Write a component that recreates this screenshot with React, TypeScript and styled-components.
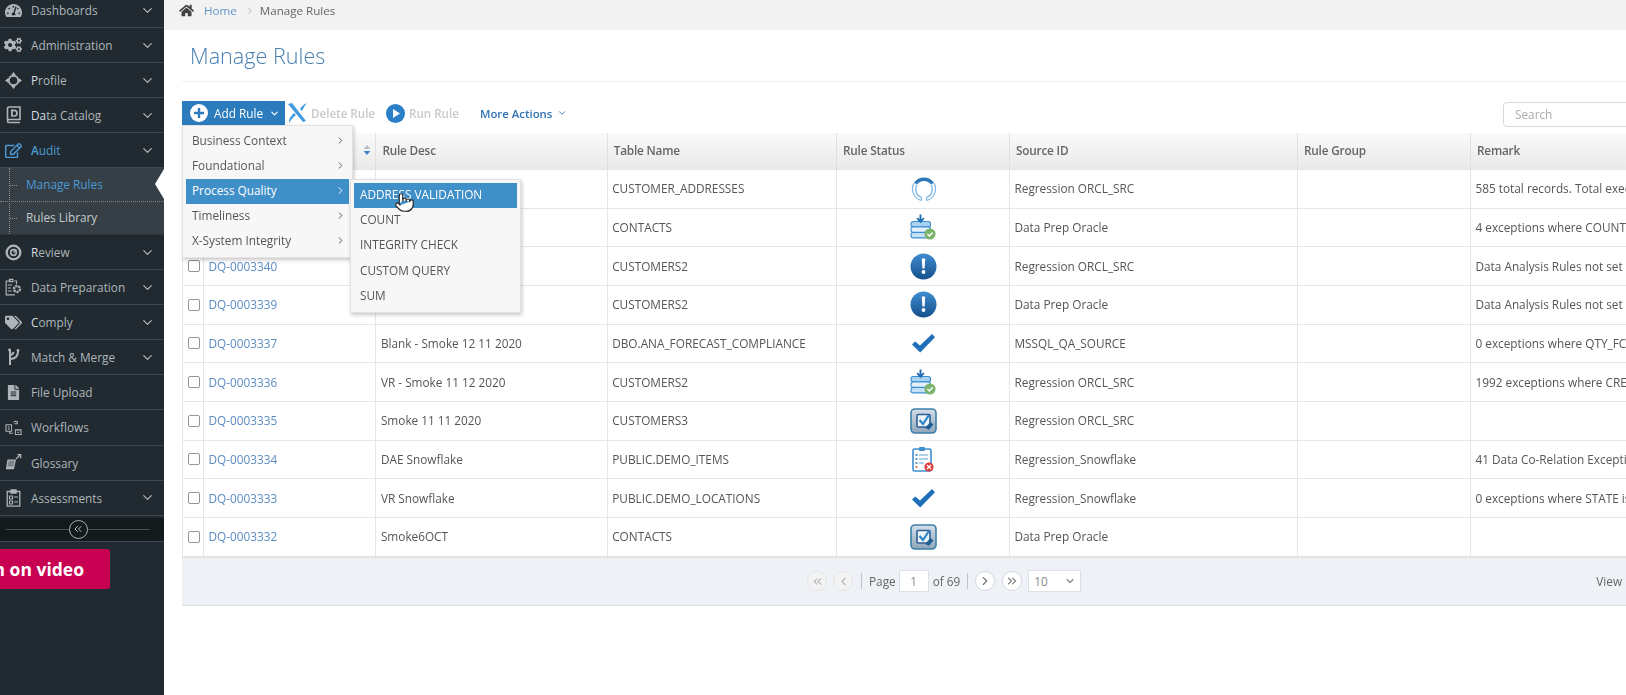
import React from "react";
import styled, { createGlobalStyle } from "styled-components";
import { ChevronDown, ChevronLeft, ChevronRight, ChevronsLeft, ChevronsRight, Pointer } from "lucide-react";
import { FaCogs, FaFileAlt, FaHome, FaRegEdit, FaTachometerAlt, FaTags } from "react-icons/fa";

const GlobalStyle = createGlobalStyle`
    html, body {
        margin: 0;
        padding: 0;
        height: 100%;
        background: #ffffff;
        overflow: hidden;
        font-family: "Open Sans", "Liberation Sans", sans-serif;
    }
`;

const Page = styled.div`
    display: flex;
    width: 1626px;
    height: 695px;
    overflow: hidden;
    font-size: 11.8px;
    color: #555;
    filter: blur(0.4px);
`;

const Sidebar = styled.aside`
    width: 164px;
    flex: none;
    background: #212a30;
    overflow: hidden;
    display: flex;
    flex-direction: column;
`;

const NavList = styled.nav`
    margin-top: -7px;
    display: flex;
    flex-direction: column;
`;

const NavItem = styled.div<{ $active?: boolean }>`
    height: 35.1px;
    box-sizing: border-box;
    flex: none;
    display: flex;
    align-items: center;
    padding: 0 9px 0 4px;
    border-bottom: 1px solid #3c464d;
    color: ${(p) => (p.$active ? "#4c9ad6" : "#aeb6bb")};
`;

const NavIcon = styled.span`
    width: 18px;
    height: 18px;
    flex: none;
    display: flex;
    align-items: center;
    justify-content: center;
    margin-right: 9px;
    color: inherit;
`;

const NavLabel = styled.span`
    flex: 1;
    white-space: nowrap;
`;

const NavKey = styled.b`
    font-weight: 500;
    color: #d8dde0;
`;

const ActiveKey = styled.b`
    font-weight: 600;
    color: #4c9ad6;
`;

const SubNav = styled.div`
    height: 66.5px;
    flex: none;
    background: #363f45;
    display: flex;
    flex-direction: column;
    position: relative;
    border-bottom: 1px solid #2b3338;
    box-sizing: border-box;

    &::before {
        content: "";
        position: absolute;
        left: 9px;
        top: 0;
        bottom: 0;
        border-left: 1px dotted #8a9297;
    }
`;

const SubItem = styled.div<{ $active?: boolean }>`
    flex: 1;
    display: flex;
    align-items: center;
    padding: 0 0 2px 26px;
    position: relative;
    color: ${(p) => (p.$active ? "#4c9ad6" : "#c4cace")};
    border-bottom: ${(p) => (p.$active ? "1px dotted #7b8388" : "none")};

    &::before {
        content: "";
        position: absolute;
        left: 10px;
        top: 50%;
        width: 7px;
        border-top: 1px dotted #8a9297;
    }
`;

const Notch = styled.span`
    position: absolute;
    right: 0;
    top: 1px;
    width: 0;
    height: 0;
    border-top: 15px solid transparent;
    border-bottom: 15px solid transparent;
    border-right: 9px solid #ffffff;
`;

const CollapseBar = styled.div`
    height: 23px;
    margin-top: 2px;
    flex: none;
    background: #14191c;
    display: flex;
    align-items: center;
    justify-content: center;
    position: relative;
    border-bottom: 1px solid #3c464d;

    &::before {
        content: "";
        position: absolute;
        left: 6px;
        right: 14px;
        top: 50%;
        border-top: 1px solid #4a5258;
    }
`;

const CollapseButton = styled.span`
    width: 17px;
    height: 17px;
    border-radius: 50%;
    border: 1px solid #a9afb3;
    background: #14191c;
    color: #b9bfc3;
    display: flex;
    align-items: center;
    justify-content: center;
    margin-left: -8px;
    position: relative;
`;

const VideoButton = styled.div`
    margin-top: 7.5px;
    width: 110px;
    height: 40px;
    flex: none;
    background: #c80052;
    border-radius: 0 3px 3px 0;
    color: #fff;
    font-family: "Open Sans", sans-serif;
    font-weight: 700;
    font-size: 17.5px;
    display: flex;
    align-items: center;
    justify-content: flex-end;
    padding-right: 26px;
    box-sizing: border-box;
    white-space: nowrap;
    overflow: hidden;
`;

const Main = styled.main`
    flex: 1;
    min-width: 0;
    display: flex;
    flex-direction: column;
    overflow: hidden;
`;

const Breadcrumb = styled.div`
    height: 30px;
    flex: none;
    background: #f2f2f2;
    display: flex;
    align-items: center;
    padding: 0 0 9px 15px;
    box-sizing: border-box;
    color: #666;
    font-size: 11.6px;
    gap: 8px;
`;

const HomeIcon = styled(FaHome)`
    color: #444;
    font-size: 15px;
    margin-right: 2px;
`;

const CrumbLink = styled.a`
    color: #5f97c8;
`;

const CrumbCurrent = styled.span`
    margin-left: -3px;
`;

const TitleBlock = styled.div`
    margin-left: 18px;
    height: 52px;
    box-sizing: border-box;
    flex: none;
    padding: 11px 0 0 8px;
    border-bottom: 1px solid #f0f0f0;
`;

const Title = styled.h1`
    margin: 0;
    font-size: 21.6px;
    line-height: 30px;
    font-weight: 300;
    color: #467fb1;
`;

const Content = styled.div`
    margin-left: 18px;
    display: flex;
    flex-direction: column;
`;

const Toolbar = styled.div`
    margin-top: 19px;
    height: 24px;
    display: flex;
    align-items: center;
    position: relative;
    z-index: 2;
`;

const AddRuleWrap = styled.div`
    position: relative;
    flex: none;
`;

const AddRuleButton = styled.div`
    width: 103px;
    height: 24px;
    background: #2b7bbd;
    color: #fff;
    display: flex;
    align-items: center;
    padding-left: 8px;
    box-sizing: border-box;
    gap: 6px;
`;

const ToolAction = styled.span<{ $gap: number }>`
    display: flex;
    align-items: center;
    gap: 4px;
    margin-left: ${(p) => p.$gap}px;
    color: #c9c9c9;
    font-weight: 600;
    font-size: 11.6px;
    white-space: nowrap;
`;

const MoreActions = styled.span`
    margin-left: 21px;
    display: flex;
    align-items: center;
    gap: 5px;
    color: #2f73b3;
    font-weight: 600;
    font-size: 11.4px;
    white-space: nowrap;
`;

const SearchBox = styled.div`
    margin-left: auto;
    margin-top: 2px;
    width: 160px;
    height: 25px;
    flex: none;
    margin-right: -37px;
    border: 1px solid #d8d8d8;
    border-radius: 4px;
    box-sizing: border-box;
    color: #aaa;
    padding-left: 11px;
    display: flex;
    align-items: center;
`;

const Menu = styled.div<{ $sub?: boolean }>`
    position: absolute;
    width: 170.5px;
    box-sizing: border-box;
    background: #f7f7f7;
    border: 1px solid #e2e2e2;
    box-shadow: 1px 2px 4px rgba(0, 0, 0, 0.22);
    padding: 3px;
    left: ${(p) => (p.$sub ? "164px" : "0")};
    top: ${(p) => (p.$sub ? "0" : "24px")};
    color: #555;
`;

const MenuRow = styled.div<{ $active?: boolean }>`
    height: 25.1px;
    box-sizing: border-box;
    position: relative;
    display: flex;
    align-items: center;
    justify-content: space-between;
    padding: 0 3px 3px 6px;
    background: ${(p) => (p.$active ? "#3f8fc9" : "transparent")};
    color: ${(p) => (p.$active ? "#fff" : "#555")};
    white-space: nowrap;
`;

const HandCursor = styled(Pointer)`
    position: absolute;
    left: 40px;
    top: 9px;
    z-index: 3;
`;

const Grid = styled.div`
    display: grid;
    grid-template-columns: 22px 172.4px 231.3px 229.3px 173px 288px 173px 400px;
`;

const HeaderRow = styled(Grid)`
    margin-top: 8px;
    height: 37px;
    background: linear-gradient(#fafafa, #e9e9e9);
`;

const HeaderCell = styled.div`
    display: flex;
    align-items: center;
    justify-content: space-between;
    padding: 0 6px 3px;
    font-weight: 600;
    letter-spacing: -0.2px;
    color: #666;
    border-right: 1px solid #e0e0e0;
    box-sizing: border-box;
`;

const SortArrows = styled.svg`
    flex: none;
    margin-right: -2px;
`;

const BodyRow = styled(Grid)`
    height: 38.67px;
    box-sizing: border-box;
    border-bottom: 1px solid #e6e6e6;
`;

const Cell = styled.div`
    display: flex;
    align-items: center;
    padding: 0 5px 1px 4.5px;
    box-sizing: border-box;
    border-right: 1px solid #e6e6e6;
    white-space: nowrap;
    overflow: hidden;
    color: #555;
`;

const CheckCell = styled(Cell)`
    border-left: 1px solid #e6e6e6;
    padding: 0 0 0 4.5px;
`;

const CheckBox = styled.span`
    width: 12px;
    height: 12px;
    box-sizing: border-box;
    flex: none;
    border: 1px solid #949494;
    border-radius: 2px;
    background: #fff;
`;

const IdLink = styled.a`
    color: #5b8cc2;
`;

const StatusCell = styled(Cell)`
    justify-content: center;
    padding: 0 0 0 1.5px;
`;

const Footer = styled.div`
    height: 49px;
    background: #eef1f6;
    border-top: 1px solid #e2e2e2;
    border-bottom: 1px solid #e2e2e2;
    box-sizing: border-box;
    display: flex;
    align-items: center;
    padding-left: 625px;
    color: #666;
    white-space: nowrap;
`;

const PagerButton = styled.span<{ $off?: boolean; $gap: number }>`
    width: 20px;
    height: 20px;
    box-sizing: border-box;
    flex: none;
    border-radius: 50%;
    background: ${(p) => (p.$off ? "#f3f3f3" : "#fff")};
    border: 1px solid ${(p) => (p.$off ? "#e6e6e6" : "#d5d9de")};
    color: ${(p) => (p.$off ? "#b5b5b5" : "#777")};
    display: flex;
    align-items: center;
    justify-content: center;
    margin-left: ${(p) => p.$gap}px;
`;

const PagerSep = styled.span<{ $gap: number }>`
    width: 1px;
    height: 16px;
    flex: none;
    background: #bfc4ca;
    margin: 0 7px 0 ${(p) => p.$gap}px;
`;

const PageInput = styled.span`
    width: 30px;
    height: 22px;
    flex: none;
    margin: 0 4px 0 3px;
    box-sizing: border-box;
    background: #fff;
    border: 1px solid #dcdfe3;
    display: flex;
    align-items: center;
    justify-content: center;
    color: #888;
`;

const PageSize = styled.span`
    width: 53px;
    height: 22px;
    flex: none;
    margin-left: 6px;
    box-sizing: border-box;
    background: #fff;
    border: 1px solid #dcdfe3;
    display: flex;
    align-items: center;
    justify-content: space-between;
    padding: 0 4px 0 5px;
    color: #888;
`;

const ViewText = styled.span`
    margin-left: 515px;
`;

type NavEntry = {
    key?: string;
    label: string;
    icon: React.ReactNode;
    arrow?: boolean;
};

const strokeIcon = { fill: "none", stroke: "currentColor", strokeWidth: 1.6 };

const ProfileIcon = () => (
    <svg width="17" height="17" viewBox="0 0 18 18">
        <circle cx="9" cy="9" r="5" {...strokeIcon} strokeWidth={2} />
        <path d="M9 0l2.4 3.2H6.6zM9 18l-2.4-3.2h4.8zM0 9l3.2-2.4v4.8zM18 9l-3.2 2.4V6.6z" fill="currentColor" />
    </svg>
);

const CatalogIcon = () => (
    <svg width="15" height="18" viewBox="0 0 15 18">
        <path d="M1.5 14V2.5A1.5 1.5 0 0 1 3 1h11v12.5H3A1.5 1.5 0 0 0 1.5 15 1.5 1.5 0 0 0 3 16.5h11" {...strokeIcon} />
        <path d="M5 3.6h3.2a3.2 3.2 0 0 1 0 7.2H5zM6.8 5.2v4h1.3a1.9 1.9 0 0 0 0-4z" fill="currentColor" fillRule="evenodd" />
    </svg>
);

const ReviewIcon = () => (
    <svg width="17" height="17" viewBox="0 0 18 18">
        <circle cx="9" cy="9" r="7.2" {...strokeIcon} strokeWidth={2.4} />
        <circle cx="9" cy="9" r="3" {...strokeIcon} strokeWidth={1.8} />
        <path d="M9 9l3-3" stroke="currentColor" strokeWidth={1.4} />
    </svg>
);

const PrepIcon = () => (
    <svg width="17" height="18" viewBox="0 0 17 18">
        <path d="M6 3H1.2v13.8h8.6" {...strokeIcon} strokeWidth={1.2} />
        <path d="M4.5 3.6V1.4h3.4v2.2zM3 7h4M3 10h3M3 13h3.6M9.5 3h2v3" {...strokeIcon} strokeWidth={1.2} />
        <circle cx="12" cy="11" r="3" {...strokeIcon} strokeWidth={2.4} strokeDasharray="2.2 0.8" />
    </svg>
);

const MergeIcon = () => (
    <svg width="15" height="18" viewBox="0 0 15 18">
        <path d="M4 17V1.5M4 11c5 0 8-2 8-8M4 7c2 0 3-1 3.5-3" fill="none" stroke="currentColor" strokeWidth={2} />
        <circle cx="12" cy="2.5" r="1.4" fill="currentColor" />
        <circle cx="3.5" cy="2" r="1.4" fill="currentColor" />
    </svg>
);

const WorkflowIcon = () => (
    <svg width="17" height="17" viewBox="0 0 18 18">
        <path d="M1 6h6v7H1zM3 8.5h2M3 10.5h2M11 11.5h6v5h-6zM13 14h2M9 3.5a3 3 0 0 1 4.5 0M13 2v3h-3M8.5 15H5v-2" {...strokeIcon} strokeWidth={1.1} />
    </svg>
);

const GlossaryIcon = () => (
    <svg width="21" height="21" viewBox="0 0 21 21">
        <path d="M4 7h10l-2.4 11.5H2.2z" fill="currentColor" />
        <path d="M5.6 8.6h6.6l-1.4 6.6H4.2z" fill="#7c8489" />
        <path d="M14 6.4L19 1.6M15.5 1.4h4v4" {...strokeIcon} strokeWidth={1.5} />
    </svg>
);

const AssessIcon = () => (
    <svg width="15" height="18" viewBox="0 0 15 18">
        <path d="M1.2 2.5h12.6v14.6H1.2zM5 1h5v3H5z" {...strokeIcon} strokeWidth={1.3} />
        <path d="M3.5 7h3v3h-3zM3.5 12h3v3h-3zM8 8h4M8 13h4" {...strokeIcon} strokeWidth={1.1} />
    </svg>
);

const navTop: NavEntry[] = [
    { label: "Dashboards", icon: <FaTachometerAlt size={17} />, arrow: true },
    { label: "Administration", icon: <FaCogs size={18} />, arrow: true },
    { key: "P", label: "rofile", icon: <ProfileIcon />, arrow: true },
    { key: "Da", label: "ta Catalog", icon: <CatalogIcon />, arrow: true },
];

const navBottom: NavEntry[] = [
    { key: "R", label: "eview", icon: <ReviewIcon />, arrow: true },
    { label: "Data Preparation", icon: <PrepIcon />, arrow: true },
    { key: "C", label: "omply", icon: <FaTags size={17} />, arrow: true },
    { label: "Match & Merge", icon: <MergeIcon />, arrow: true },
    { label: "File Upload", icon: <FaFileAlt size={15} /> },
    { label: "Workflows", icon: <WorkflowIcon /> },
    { label: "Glossary", icon: <GlossaryIcon /> },
    { label: "Assessments", icon: <AssessIcon />, arrow: true },
];

function NavLine({ entry }: { entry: NavEntry }) {
    return (
        <NavItem>
            <NavIcon>{entry.icon}</NavIcon>
            <NavLabel>
                {entry.key && <NavKey>{entry.key}</NavKey>}
                {entry.label}
            </NavLabel>
            {entry.arrow && <ChevronDown size={15} strokeWidth={2} />}
        </NavItem>
    );
}

type Status = "ring" | "loaded" | "alert" | "check" | "box" | "clip";

function StatusIcon({ kind }: { kind: Status }) {
    if (kind === "ring") {
        return (
            <svg width="26" height="26" viewBox="0 0 26 26">
                <path d="M10.5 24.5A11.8 11.8 0 0 1 3.4 6.6M15.5 24.5A11.8 11.8 0 0 0 22.6 6.6" fill="none" stroke="#7db6e2" strokeWidth={1.2} />
                <path d="M10.5 21.5A8.8 8.8 0 0 1 5.8 8.8M15.5 21.5A8.8 8.8 0 0 0 20.2 8.8" fill="none" stroke="#7db6e2" strokeWidth={1.2} />
                <path d="M10.5 24.5v-3M15.5 24.5v-3" stroke="#7db6e2" strokeWidth={1.2} />
                <path d="M4.6 7.6A10.3 10.3 0 0 1 21.4 7.6" fill="none" stroke="#2c77b8" strokeWidth={3.4} />
            </svg>
        );
    }
    if (kind === "loaded") {
        return (
            <svg width="27" height="26" viewBox="0 0 27 26">
                <rect x="1" y="7.5" width="19.5" height="5.4" rx="2.2" fill="#a9d2f0" stroke="#3d8fd0" strokeWidth={1.1} />
                <rect x="1" y="13" width="19.5" height="5.4" rx="2.2" fill="#e2f0fa" stroke="#3d8fd0" strokeWidth={1.1} />
                <rect x="1" y="18.5" width="19.5" height="5.4" rx="2.2" fill="#c4e0f5" stroke="#3d8fd0" strokeWidth={1.1} />
                <path d="M10.5 0.5v6.5M7.2 4.2l3.3 3.6 3.3-3.6" fill="none" stroke="#1f6fb2" strokeWidth={1.9} />
                <circle cx="20" cy="20" r="5.6" fill="#7cb46b" />
                <path d="M17.4 20l2 2 3.2-3.6" fill="none" stroke="#fff" strokeWidth={1.5} />
            </svg>
        );
    }
    if (kind === "alert") {
        return (
            <svg width="27" height="27" viewBox="0 0 27 27">
                <defs>
                    <linearGradient id="alertFill" x1="0" y1="0" x2="0" y2="1">
                        <stop offset="0" stopColor="#3f8dd0" />
                        <stop offset="1" stopColor="#154f8c" />
                    </linearGradient>
                </defs>
                <circle cx="13.5" cy="13.5" r="13" fill="url(#alertFill)" />
                <path d="M11.8 5.5h3.4l-.6 10h-2.2z" fill="#fff" />
                <circle cx="13.5" cy="19" r="1.9" fill="#fff" />
            </svg>
        );
    }
    if (kind === "check") {
        return (
            <svg width="25" height="21" viewBox="0 0 25 21">
                <path d="M1 11.5l3.2-3L9 12.5 21 1l3 3.2L9.2 19.5z" fill="#1f6fb8" />
            </svg>
        );
    }
    if (kind === "box") {
        return (
            <svg width="27" height="26" viewBox="0 0 27 26">
                <defs>
                    <linearGradient id="boxFill" x1="0" y1="0" x2="0" y2="1">
                        <stop offset="0" stopColor="#d4dfe9" />
                        <stop offset="1" stopColor="#8ea6ba" />
                    </linearGradient>
                </defs>
                <rect x="1" y="1" width="25" height="24" rx="4" fill="url(#boxFill)" stroke="#3d7fa8" strokeWidth={1.6} />
                <rect x="7" y="6.5" width="13" height="12.5" rx="1" fill="#eef3f7" stroke="#2f5f94" strokeWidth={1.6} />
                <path d="M9.5 12l3.5 4 6-9" fill="none" stroke="#2a83c8" strokeWidth={2.2} />
                <path d="M15 20l5.4-6 3 2.6-4.4 5.2z" fill="#1f5f96" />
            </svg>
        );
    }
    return (
        <svg width="23" height="27" viewBox="0 0 23 27">
            <rect x="1" y="3" width="18" height="22" rx="1.5" fill="#fff" stroke="#3d8fd0" strokeWidth={1.6} />
            <rect x="7" y="1" width="6" height="4" rx="1" fill="#3d8fd0" />
            <path d="M7 9h9M7 13h9M7 17h5" stroke="#5ea3d8" strokeWidth={1.2} />
            <path d="M3.5 9h2M3.5 13h2M3.5 17h2" stroke="#2c77b8" strokeWidth={1.6} />
            <path d="M3.5 21h2" stroke="#d64541" strokeWidth={1.6} />
            <circle cx="17" cy="21" r="4.6" fill="#dd3c3c" />
            <path d="M15 19l4 4M19 19l-4 4" stroke="#fff" strokeWidth={1.3} />
        </svg>
    );
}

type Rule = {
    id: string;
    desc: string;
    table: string;
    status: Status;
    source: string;
    remark: string;
};

const rules: Rule[] = [
    { id: "", desc: "", table: "CUSTOMER_ADDRESSES", status: "ring", source: "Regression ORCL_SRC", remark: "585 total records. Total exec" },
    { id: "", desc: "", table: "CONTACTS", status: "loaded", source: "Data Prep Oracle", remark: "4 exceptions where COUNT" },
    { id: "DQ-0003340", desc: "", table: "CUSTOMERS2", status: "alert", source: "Regression ORCL_SRC", remark: "Data Analysis Rules not set" },
    { id: "DQ-0003339", desc: "", table: "CUSTOMERS2", status: "alert", source: "Data Prep Oracle", remark: "Data Analysis Rules not set" },
    { id: "DQ-0003337", desc: "Blank - Smoke 12 11 2020", table: "DBO.ANA_FORECAST_COMPLIANCE", status: "check", source: "MSSQL_QA_SOURCE", remark: "0 exceptions where QTY_FC" },
    { id: "DQ-0003336", desc: "VR - Smoke 11 12 2020", table: "CUSTOMERS2", status: "loaded", source: "Regression ORCL_SRC", remark: "1992 exceptions where CRE" },
    { id: "DQ-0003335", desc: "Smoke 11 11 2020", table: "CUSTOMERS3", status: "box", source: "Regression ORCL_SRC", remark: "" },
    { id: "DQ-0003334", desc: "DAE Snowflake", table: "PUBLIC.DEMO_ITEMS", status: "clip", source: "Regression_Snowflake", remark: "41 Data Co-Relation Excepti" },
    { id: "DQ-0003333", desc: "VR Snowflake", table: "PUBLIC.DEMO_LOCATIONS", status: "check", source: "Regression_Snowflake", remark: "0 exceptions where STATE is" },
    { id: "DQ-0003332", desc: "Smoke6OCT", table: "CONTACTS", status: "box", source: "Data Prep Oracle", remark: "" },
];

const categories = ["Business Context", "Foundational", "Process Quality", "Timeliness", "X-System Integrity"];
const checks = ["ADDRESS VALIDATION", "COUNT", "INTEGRITY CHECK", "CUSTOM QUERY", "SUM"];

function RuleMenu() {
    return (
        <Menu>
            {categories.map((name) => (
                <MenuRow key={name} $active={name === "Process Quality"}>
                    {name}
                    <ChevronRight size={11} />
                    {name === "Process Quality" && (
                        <Menu $sub>
                            {checks.map((check, i) => (
                                <MenuRow key={check} $active={i === 0}>
                                    {check}
                                    {i === 0 && <HandCursor size={21} fill="#fff" stroke="#2a2a2a" strokeWidth={1.4} />}
                                </MenuRow>
                            ))}
                        </Menu>
                    )}
                </MenuRow>
            ))}
        </Menu>
    );
}

export default function App() {
    return (
        <Page>
            <GlobalStyle />
            <Sidebar>
                <NavList>
                    {navTop.map((entry) => (
                        <NavLine key={entry.label} entry={entry} />
                    ))}
                    <NavItem $active>
                        <NavIcon>
                            <FaRegEdit size={17} />
                        </NavIcon>
                        <NavLabel>
                            <ActiveKey>A</ActiveKey>udit
                        </NavLabel>
                        <ChevronDown size={15} color="#aeb6bb" />
                    </NavItem>
                    <SubNav>
                        <SubItem $active>
                            Manage Rules
                            <Notch />
                        </SubItem>
                        <SubItem>Rules Library</SubItem>
                    </SubNav>
                    {navBottom.map((entry) => (
                        <NavLine key={entry.label} entry={entry} />
                    ))}
                </NavList>
                <CollapseBar>
                    <CollapseButton>
                        <ChevronsLeft size={12} />
                    </CollapseButton>
                </CollapseBar>
                <VideoButton>n on video</VideoButton>
            </Sidebar>
            <Main>
                <Breadcrumb>
                    <HomeIcon />
                    <CrumbLink>Home</CrumbLink>
                    <ChevronRight size={10} color="#aaa" />
                    <CrumbCurrent>Manage Rules</CrumbCurrent>
                </Breadcrumb>
                <TitleBlock>
                    <Title>Manage Rules</Title>
                </TitleBlock>
                <Content>
                    <Toolbar>
                        <AddRuleWrap>
                            <AddRuleButton>
                                <svg width="18" height="18" viewBox="0 0 18 18">
                                    <circle cx="9" cy="9" r="9" fill="#fff" />
                                    <path d="M9 4v10M4 9h10" stroke="#2b7bbd" strokeWidth={2.4} />
                                </svg>
                                Add Rule
                                <ChevronDown size={11} strokeWidth={2.4} />
                            </AddRuleButton>
                            <RuleMenu />
                        </AddRuleWrap>
                        <ToolAction $gap={2}>
                            <svg width="20" height="20" viewBox="0 0 20 20">
                                <path d="M1 1l4-1 14 18-3 1zM2 20c0-5 2-7 5-10l2 2c-3 2-5 5-7 8zM13 6c1-2 3-4 7-6-2 3-4 5-5 8z" fill="#3f9be0" />
                            </svg>
                            Delete Rule
                        </ToolAction>
                        <ToolAction $gap={11}>
                            <svg width="19" height="19" viewBox="0 0 19 19">
                                <circle cx="9.5" cy="9.5" r="9.5" fill="#2b7fc8" />
                                <path d="M7 5l7 4.5L7 14z" fill="#fff" />
                            </svg>
                            Run Rule
                        </ToolAction>
                        <MoreActions>
                            More Actions
                            <ChevronDown size={10} strokeWidth={2.2} />
                        </MoreActions>
                        <SearchBox>Search</SearchBox>
                    </Toolbar>
                    <HeaderRow>
                        <HeaderCell />
                        <HeaderCell>
                            <span />
                            <SortArrows width="8" height="12" viewBox="0 0 8 12">
                                <path d="M4 1l3.4 4H.6z" fill="#b5bcc4" />
                                <path d="M4 11L.6 7h6.8z" fill="#3f86c8" />
                            </SortArrows>
                        </HeaderCell>
                        <HeaderCell>Rule Desc</HeaderCell>
                        <HeaderCell>Table Name</HeaderCell>
                        <HeaderCell>Rule Status</HeaderCell>
                        <HeaderCell>Source ID</HeaderCell>
                        <HeaderCell>Rule Group</HeaderCell>
                        <HeaderCell>Remark</HeaderCell>
                    </HeaderRow>
                    {rules.map((rule, i) => (
                        <BodyRow key={i}>
                            <CheckCell>
                                <CheckBox />
                            </CheckCell>
                            <Cell>
                                <IdLink>{rule.id}</IdLink>
                            </Cell>
                            <Cell>{rule.desc}</Cell>
                            <Cell>{rule.table}</Cell>
                            <StatusCell>
                                <StatusIcon kind={rule.status} />
                            </StatusCell>
                            <Cell>{rule.source}</Cell>
                            <Cell />
                            <Cell>{rule.remark}</Cell>
                        </BodyRow>
                    ))}
                    <Footer>
                        <PagerButton $off $gap={0}>
                            <ChevronsLeft size={13} />
                        </PagerButton>
                        <PagerButton $off $gap={6}>
                            <ChevronLeft size={13} />
                        </PagerButton>
                        <PagerSep $gap={8} />
                        Page
                        <PageInput>1</PageInput>
                        of 69
                        <PagerSep $gap={7} />
                        <PagerButton $gap={0}>
                            <ChevronRight size={14} />
                        </PagerButton>
                        <PagerButton $gap={7}>
                            <ChevronsRight size={14} />
                        </PagerButton>
                        <PageSize>
                            10
                            <ChevronDown size={12} strokeWidth={2.4} />
                        </PageSize>
                        <ViewText>View 1</ViewText>
                    </Footer>
                </Content>
            </Main>
        </Page>
    );
}
